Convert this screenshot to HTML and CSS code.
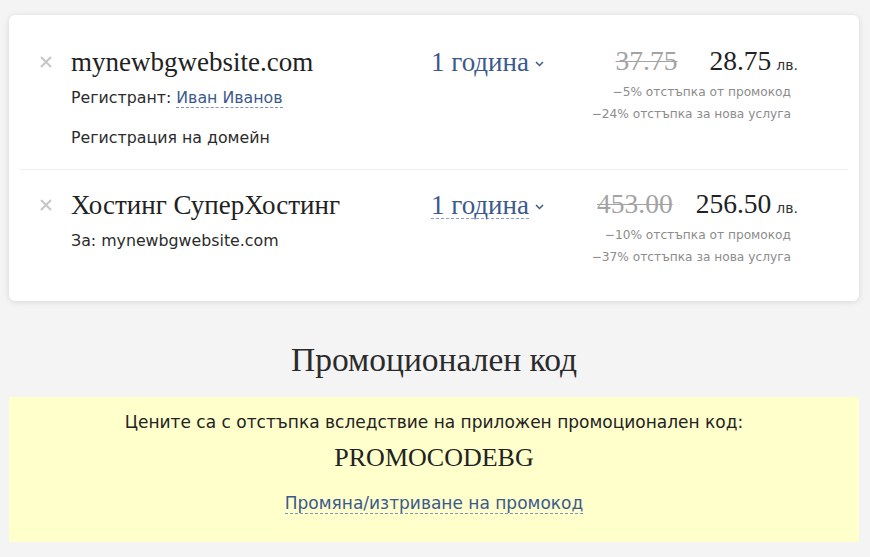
FILE: index.html
```html
<!DOCTYPE html>
<html lang="bg">
<head>
<meta charset="utf-8">
<title>Количка</title>
<link rel="stylesheet" href="styles.css">
</head>
<body>
<div class="page">
  <div class="card">
    <div class="row row-first">
      <div class="remove"><svg width="12" height="12" viewBox="0 0 12 12"><path d="M1 1L11 11M11 1L1 11" stroke="#c6c6c6" stroke-width="2"/></svg></div>
      <div class="name">
        <div class="title">mynewbgwebsite.com</div>
        <div class="sub first-sub">Регистрант: <span class="link">Иван Иванов</span></div>
        <div class="sub extra">Регистрация на домейн</div>
      </div>
      <div class="period"><span class="period-text">1 година</span><svg class="chev" width="9" height="6" viewBox="0 0 9 6"><path d="M1 1L4.5 4.5L8 1" fill="none" stroke="#3b5a8c" stroke-width="1.5"/></svg></div>
      <div class="price">
        <div class="price-line"><span class="old">37.75</span><span class="new wide-gap">28.75</span><span class="cur">лв.</span></div>
        <div class="disc">−5% отстъпка от промокод</div>
        <div class="disc">−24% отстъпка за нова услуга</div>
      </div>
    </div>
    <div class="row">
      <div class="remove"><svg width="12" height="12" viewBox="0 0 12 12"><path d="M1 1L11 11M11 1L1 11" stroke="#c6c6c6" stroke-width="2"/></svg></div>
      <div class="name">
        <div class="title">Хостинг СуперХостинг</div>
        <div class="sub first-sub">За: mynewbgwebsite.com</div>
      </div>
      <div class="period"><span class="period-text dashed">1 година</span><svg class="chev" width="9" height="6" viewBox="0 0 9 6"><path d="M1 1L4.5 4.5L8 1" fill="none" stroke="#3b5a8c" stroke-width="1.5"/></svg></div>
      <div class="price">
        <div class="price-line"><span class="old">453.00</span><span class="new">256.50</span><span class="cur">лв.</span></div>
        <div class="disc">−10% отстъпка от промокод</div>
        <div class="disc">−37% отстъпка за нова услуга</div>
      </div>
    </div>
  </div>

  <h2 class="promo-heading">Промоционален код</h2>
  <div class="promo-box">
    <div class="promo-text">Цените са с отстъпка вследствие на приложен промоционален код:</div>
    <div class="promo-code">PROMOCODEBG</div>
    <div class="promo-link"><span class="link">Промяна/изтриване на промокод</span></div>
  </div>
</div>
</body>
</html>
```
FILE: styles.css
```css
* { box-sizing: border-box; }
html, body { margin: 0; padding: 0; }
body {
  background: #f4f4f5;
  font-family: "DejaVu Sans", Verdana, sans-serif;
  color: #2b2b2b;
}
.page {
  padding: 15px 11px 0 9px;
}
.card {
  background: #fff;
  border-radius: 6px;
  box-shadow: 0 1px 6px rgba(0,0,0,0.12);
  padding: 12px 11px 13px;
}
.row {
  display: grid;
  grid-template-columns: 32px 1fr 160px 210px;
  padding: 20px 49px 20px 19px;
}
.row-first {
  border-bottom: 1px solid #efefef;
  padding-bottom: 21px;
}
.remove {
  height: 30px;
  display: flex;
  align-items: center;
  padding-left: 1px;
}
.title {
  font-family: "Liberation Serif", "DejaVu Serif", serif;
  font-size: 27px;
  line-height: 30px;
  color: #222;
}
.sub {
  font-size: 15.8px;
  line-height: 20px;
  color: #2b2b2b;
}
.first-sub { margin-top: 11px; }
.extra { margin-top: 20px; }
.link {
  color: #3b5a8c;
  border-bottom: 1px dashed #7d93b8;
}
.period {
  font-family: "Liberation Serif", "DejaVu Serif", serif;
  font-size: 27px;
  line-height: 28px;
  color: #3b5a8c;
  display: flex;
  align-items: center;
  height: 30px;
  padding-left: 2px;
}
.period-text { display: inline-block; line-height: 26px; }
.period-text.dashed { border-bottom: 1px dashed #8a9dbd; }
.chev { margin-left: 6px; margin-top: 4px; }
.price {
  text-align: right;
}
.price-line {
  font-family: "Liberation Serif", "DejaVu Serif", serif;
  font-size: 27.5px;
  line-height: 28px;
  white-space: nowrap;
  padding-right: 1px;
}
.old {
  color: #a3a3a3;
  text-decoration: line-through;
  text-decoration-thickness: 1px;
}
.new {
  color: #222;
  margin-left: 23px;
}
.new.wide-gap { margin-left: 32px; }
.cur {
  font-family: "DejaVu Sans", Verdana, sans-serif;
  font-size: 14px;
  color: #333;
  margin-left: 5px;
}
.disc {
  font-size: 12.2px;
  line-height: 22px;
  color: #8c8c8c;
  padding-right: 8px;
}
.price-line + .disc { margin-top: 2px; }
.promo-heading {
  margin: 39px 0 17px;
  text-align: center;
  font-family: "Liberation Serif", "DejaVu Serif", serif;
  font-weight: normal;
  font-size: 33.5px;
  line-height: 40px;
  color: #2b2b2b;
}
.promo-box {
  background: #ffffcc;
  text-align: center;
  padding: 13px 0 27px;
}
.promo-text {
  font-size: 17px;
  line-height: 24px;
  color: #222;
}
.promo-code {
  margin-top: 9px;
  font-family: "Liberation Serif", "DejaVu Serif", serif;
  font-size: 26px;
  line-height: 30px;
  color: #222;
}
.promo-link {
  margin-top: 18px;
  font-size: 17px;
  line-height: 24px;
}
```
